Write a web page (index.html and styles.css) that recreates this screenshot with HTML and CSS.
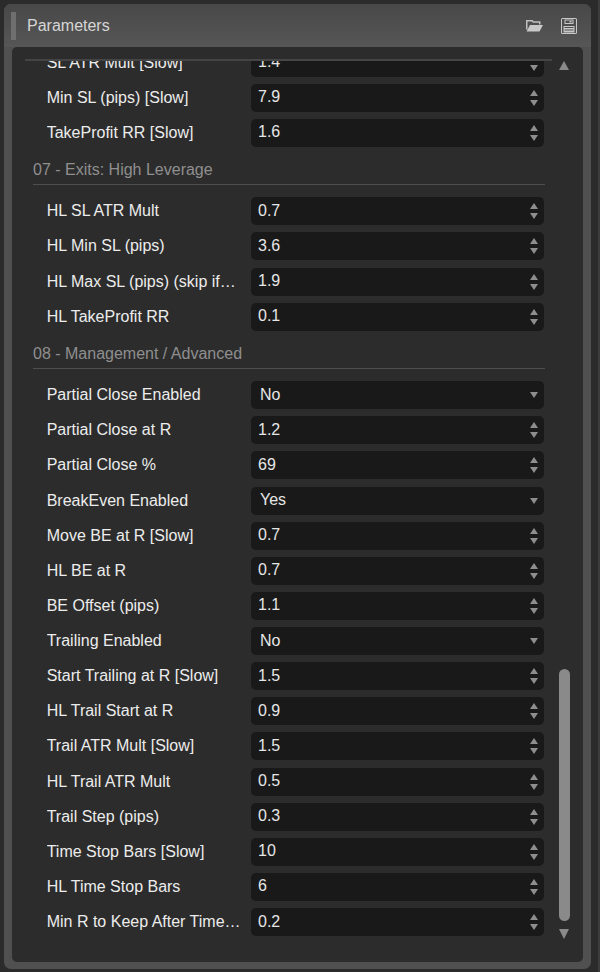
FILE: index.html
```html
<!DOCTYPE html>
<html lang="en">
<head>
<meta charset="utf-8">
<title>Parameters</title>
<link rel="stylesheet" href="styles.css">
</head>
<body>
<div class="shell">
<section class="panel">
  <header class="head">
    <span class="grip"></span>
    <h1 class="title">Parameters</h1>
    <button class="tool tool-open" aria-label="Open">
      <svg width="17" height="12" viewBox="0 0 17 12"><path class="ic-line" d="M.75 9.500V.75h5.500l1 1.250h6.500v2.500"/><path class="ic" d="M4 5H17L13.500 11.500H.5z"/></svg>
    </button>
    <button class="tool" aria-label="Save">
      <svg width="16" height="16" viewBox="0 0 16 16"><path class="ic" fill-rule="evenodd" d="M1.500 0h13A1.500 1.500 0 0 1 16 1.500v13a1.500 1.500 0 0 1-1.500 1.500h-13A1.500 1.500 0 0 1 0 14.500v-13A1.500 1.500 0 0 1 1.500 0zM1 1v14h14V1zM3.500 1.500h9v4.500h-9zM4.500 2.500v2.500h7V2.500zM8.500 3h2v1.500h-2zM2.500 8h11v6.500h-11zM3.500 9v1h9V9zM3.500 11.500v1h9v-1z"/></svg>
    </button>
  </header>
  <div class="body">
    <div class="view">
      <div class="list">
        <div class="row"><span class="lab">SL ATR Mult [Slow]</span><div class="field">1.4<span class="spin"><i class="up"></i><i class="dn"></i></span></div></div>
        <div class="row"><span class="lab">Min SL (pips) [Slow]</span><div class="field">7.9<span class="spin"><i class="up"></i><i class="dn"></i></span></div></div>
        <div class="row"><span class="lab">TakeProfit RR [Slow]</span><div class="field">1.6<span class="spin"><i class="up"></i><i class="dn"></i></span></div></div>
        <h2 class="sec">07 - Exits: High Leverage</h2>
        <div class="row"><span class="lab">HL SL ATR Mult</span><div class="field">0.7<span class="spin"><i class="up"></i><i class="dn"></i></span></div></div>
        <div class="row"><span class="lab">HL Min SL (pips)</span><div class="field">3.6<span class="spin"><i class="up"></i><i class="dn"></i></span></div></div>
        <div class="row"><span class="lab">HL Max SL (pips) (skip if&gt;max)</span><div class="field">1.9<span class="spin"><i class="up"></i><i class="dn"></i></span></div></div>
        <div class="row"><span class="lab">HL TakeProfit RR</span><div class="field">0.1<span class="spin"><i class="up"></i><i class="dn"></i></span></div></div>
        <h2 class="sec">08 - Management / Advanced</h2>
        <div class="row"><span class="lab">Partial Close Enabled</span><div class="field sel">No<span class="spin"><i class="dn"></i></span></div></div>
        <div class="row"><span class="lab">Partial Close at R</span><div class="field">1.2<span class="spin"><i class="up"></i><i class="dn"></i></span></div></div>
        <div class="row"><span class="lab">Partial Close %</span><div class="field">69<span class="spin"><i class="up"></i><i class="dn"></i></span></div></div>
        <div class="row"><span class="lab">BreakEven Enabled</span><div class="field sel">Yes<span class="spin"><i class="dn"></i></span></div></div>
        <div class="row"><span class="lab">Move BE at R [Slow]</span><div class="field">0.7<span class="spin"><i class="up"></i><i class="dn"></i></span></div></div>
        <div class="row"><span class="lab">HL BE at R</span><div class="field">0.7<span class="spin"><i class="up"></i><i class="dn"></i></span></div></div>
        <div class="row"><span class="lab">BE Offset (pips)</span><div class="field">1.1<span class="spin"><i class="up"></i><i class="dn"></i></span></div></div>
        <div class="row"><span class="lab">Trailing Enabled</span><div class="field sel">No<span class="spin"><i class="dn"></i></span></div></div>
        <div class="row"><span class="lab">Start Trailing at R [Slow]</span><div class="field">1.5<span class="spin"><i class="up"></i><i class="dn"></i></span></div></div>
        <div class="row"><span class="lab">HL Trail Start at R</span><div class="field">0.9<span class="spin"><i class="up"></i><i class="dn"></i></span></div></div>
        <div class="row"><span class="lab">Trail ATR Mult [Slow]</span><div class="field">1.5<span class="spin"><i class="up"></i><i class="dn"></i></span></div></div>
        <div class="row"><span class="lab">HL Trail ATR Mult</span><div class="field">0.5<span class="spin"><i class="up"></i><i class="dn"></i></span></div></div>
        <div class="row"><span class="lab">Trail Step (pips)</span><div class="field">0.3<span class="spin"><i class="up"></i><i class="dn"></i></span></div></div>
        <div class="row"><span class="lab">Time Stop Bars [Slow]</span><div class="field">10<span class="spin"><i class="up"></i><i class="dn"></i></span></div></div>
        <div class="row"><span class="lab">HL Time Stop Bars</span><div class="field">6<span class="spin"><i class="up"></i><i class="dn"></i></span></div></div>
        <div class="row"><span class="lab">Min R to Keep After Time Stop</span><div class="field">0.2<span class="spin"><i class="up"></i><i class="dn"></i></span></div></div>
      </div>
    </div>
    <div class="sbar">
      <i class="sb-up"></i>
      <div class="track"><div class="thumb"></div></div>
      <i class="sb-dn"></i>
    </div>
  </div>
</section>
<div class="edge"></div>
</div>
</body>
</html>
```
FILE: styles.css
```css
* { box-sizing: border-box; }
html, body { margin: 0; height: 100%; }
body {
  background: #2b2b2b;
  font-family: "Liberation Sans", Arial, sans-serif;
  overflow: hidden;
}
.shell {
  display: flex;
  height: 972px;
  padding: 4px 0 3px 4px;
  gap: 7px;
}
.panel {
  width: 587px;
  height: 965px;
  flex: none;
  display: flex;
  flex-direction: column;
  background: #505050;
  border-radius: 7px;
  padding: 0 8px 7px 8px;
}
.edge {
  flex: 1;
  margin-top: -4px;
  margin-bottom: -3px;
  background: #3c3c3c;
}
.head {
  height: 43px;
  flex: none;
  display: flex;
  align-items: center;
  margin: 0 -8px 0 -8px;
  padding: 0 14px 0 7px;
  border-radius: 7px 7px 0 0;
  background: linear-gradient(#484848, #565656);
}
.grip { width: 5px; height: 28px; background: #6f6f6f; flex: none; margin-top: 1px; }
.title {
  margin: 0 0 0 11px;
  flex: 1;
  font-size: 16px;
  font-weight: 400;
  color: #d6d6d6;
}
.tool {
  display: flex;
  align-items: center;
  justify-content: center;
  height: 18px;
  padding: 0;
  margin-left: 18px;
  border: 0;
  background: none;
}
.tool-open { margin-top: 1px; }
.ic { fill: #c8c8c8; }
.ic-line { fill: none; stroke: #c0c0c0; stroke-width: 1.5; }
.body {
  flex: 1;
  min-height: 0;
  display: flex;
  background: #2c2c2c;
  border-radius: 5px;
}
.view {
  width: 527px;
  margin: 12px 0 0 13px;
  overflow: hidden;
  border-top: 2px solid #454545;
}
.list { margin-top: -16px; }
.row {
  display: flex;
  align-items: center;
  height: 35.140px;
  padding-left: 21.700px;
}
.lab {
  width: 204.300px;
  flex: none;
  padding-right: 8px;
  font-size: 16px;
  color: #ececec;
  white-space: nowrap;
  overflow: hidden;
  text-overflow: ellipsis;
}
.field {
  flex: none;
  width: 293px;
  height: 28px;
  display: flex;
  align-items: center;
  justify-content: space-between;
  padding: 0 4px 1px 7px;
  background: #191919;
  border-radius: 5px;
  font-size: 16px;
  color: #e6e6e6;
}
.sel { padding-left: 9px; }
.spin {
  width: 12px;
  display: flex;
  flex-direction: column;
  align-items: center;
  gap: 4px;
  margin-top: 1px;
}
.up, .dn { display: block; width: 0; height: 0; border-left: 4px solid transparent; border-right: 4px solid transparent; }
.up { border-bottom: 6.500px solid #8e8e8e; }
.dn { border-top: 6.500px solid #8e8e8e; }
.sbar {
  flex: 1;
  display: flex;
  flex-direction: column;
  align-items: center;
  padding: 14px 7px 23px 0;
}
.sb-up, .sb-dn { display: block; width: 0; height: 0; border-left: 5.500px solid transparent; border-right: 5.500px solid transparent; flex: none; }
.sb-up { border-bottom: 9px solid #8a8a8a; }
.sb-dn { border-top: 10px solid #8a8a8a; }
.track { flex: 1; width: 11px; display: flex; flex-direction: column; justify-content: flex-end; padding-bottom: 8px; }
.thumb { height: 252px; background: #8a8a8a; border-radius: 6px; }
.sec {
  margin: 0 0 9px 8px;
  width: 512px;
  height: 34.400px;
  padding-top: 11px;
  border-bottom: 1px solid #4e4e4e;
  font-size: 16px;
  line-height: 18px;
  font-weight: 400;
  color: #8f8f8f;
}
```
